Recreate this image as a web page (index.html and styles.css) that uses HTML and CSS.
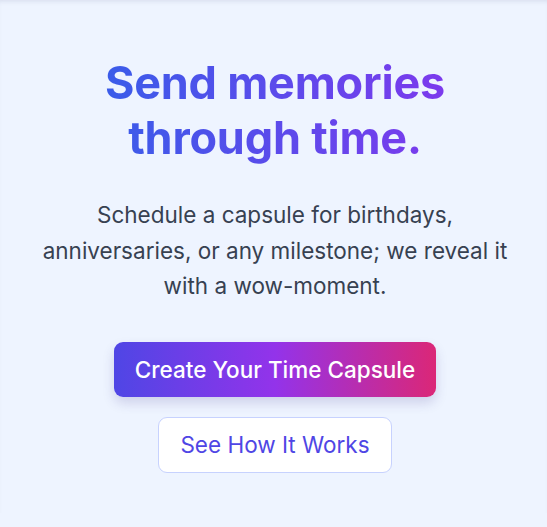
FILE: index.html
```html
<!DOCTYPE html>
<html>
<head>
<link rel="stylesheet" href="styles.css">
</head>
<body>

<section class="hero">
	<h1 class="hero-title"><span class="grad-text">Send memories<br>through time.</span></h1>
	<p class="hero-lead">Schedule a capsule for birthdays, anniversaries, or any milestone; we reveal it with a wow-moment.</p>
	<div class="hero-actions">
		<a class="btn btn-primary" href="#">Create Your Time Capsule</a>
		<a class="btn btn-outline" href="#">See How It Works</a>
	</div>
</section>

</body>
</html>
```

FILE: styles.css
```css
html, body {
	margin:0;
	padding:0;
}
body {
	background-color:#eef4ff;
	font-family:Inter, "Noto Sans", sans-serif;
	min-height:527px;
}
section.hero {
	box-shadow:inset 0 4px 5px -3px rgba(30, 41, 90, 0.12);
	padding:55px 21px 40px 24px;
	text-align:center;
}
h1.hero-title {
	margin:0;
	font-size:45px;
	font-weight:700;
	line-height:55px;
	letter-spacing:-0.2px;
}
.grad-text {
	display:inline-block;
	background:linear-gradient(90deg, #3a5ce9, #7c3aed);
	-webkit-background-clip:text;
	background-clip:text;
	color:transparent;
}
p.hero-lead {
	margin:32px auto 0;
	max-width:480px;
	font-size:22.5px;
	line-height:35.5px;
	color:#374151;
}
div.hero-actions {
	margin-top:38px;
	display:flex;
	flex-direction:column;
	align-items:center;
	gap:20px;
}
a.btn {
	display:inline-block;
	font-size:22.5px;
	line-height:29px;
	text-decoration:none;
	border-radius:9px;
	padding:13px 21px;
}
a.btn-primary {
	color:white;
	font-weight:500;
	background:linear-gradient(90deg, #4f46e5, #9333ea 50%, #db2777);
	box-shadow:0 6px 12px rgba(60, 50, 140, 0.18);
}
a.btn-outline {
	color:#4f46e5;
	background-color:white;
	border:1px solid #c7d2fe;
	line-height:28px;
}
```
